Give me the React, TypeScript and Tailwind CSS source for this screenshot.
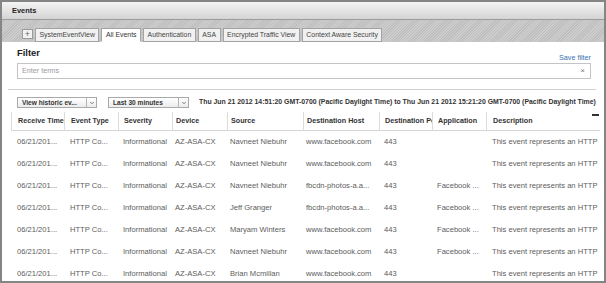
import { ChevronDown } from "lucide-react";

const tabs = [
  "SystemEventView",
  "All Events",
  "Authentication",
  "ASA",
  "Encrypted Traffic View",
  "Context Aware Security",
];

const columns = [
  { label: "Receive Time", w: "w-[53px]", pad: "pl-[6px]" },
  { label: "Event Type", w: "w-[54px]", pad: "pl-[6px]" },
  { label: "Severity", w: "w-[54px]", pad: "pl-[5px]" },
  { label: "Device", w: "w-[55px]", pad: "pl-[3px]" },
  { label: "Source", w: "w-[76px]", pad: "pl-[3px]" },
  { label: "Destination Host", w: "w-[76px]", pad: "pl-[3px]" },
  { label: "Destination Port", w: "w-[53px]", pad: "pl-[5px]" },
  { label: "Application", w: "w-[54px]", pad: "pl-[5px]" },
  { label: "Description", w: "w-[114px]", pad: "pl-[6px]" },
];

const rows = [
  ["Navneet Niebuhr", "www.facebook.com", ""],
  ["Navneet Niebuhr", "www.facebook.com", ""],
  ["Navneet Niebuhr", "fbcdn-photos-a.a...", "Facebook ..."],
  ["Jeff Granger", "fbcdn-photos-a.a...", "Facebook ..."],
  ["Maryam Winters", "www.facebook.com", "Facebook ..."],
  ["Navneet Niebuhr", "www.facebook.com", "Facebook ..."],
  ["Brian Mcmillan", "www.facebook.com", ""],
];

function Dropdown({ label, width }: { label: string; width: string }) {
  return (
    <div
      className={`${width} h-[11px] flex border border-[#a9a9a9] bg-gradient-to-b from-white to-[#ececec]`}
    >
      <span className="flex-1 pl-[4px] text-[6.6px] leading-[9px] font-bold text-[#333] whitespace-nowrap overflow-hidden">
        {label}
      </span>
      <span className="w-[10px] border-l border-[#b5b5b5] flex items-center justify-center">
        <ChevronDown className="w-[6px] h-[6px] text-[#555]" strokeWidth={3} />
      </span>
    </div>
  );
}

export default function App() {
  return (
    <div className="w-[606px] h-[283px] overflow-hidden border-2 border-[#858585] bg-white flex flex-col font-['Liberation_Sans',Arial,sans-serif]">
      {/* Title bar */}
      <div className="h-[18px] shrink-0 flex items-center pl-[10px] bg-gradient-to-b from-[#f4f4f4] to-[#d4d4d4] border-b border-[#9c9c9c]">
        <span className="text-[7.4px] font-bold text-[#222]">Events</span>
      </div>

      {/* Tab band */}
      <div className="h-[22px] shrink-0 flex items-end pl-[20px] gap-[2px] bg-[repeating-linear-gradient(-45deg,#cdcdcd_0px,#cdcdcd_1px,#bfbfbf_1px,#bfbfbf_2px)]">
        <div className="w-[11px] h-[10px] mb-[3px] border border-[#9a9a9a] bg-[#f2f2f2] flex items-center justify-center text-[9px] leading-none text-[#666]">
          +
        </div>
        {tabs.map((t) => (
          <div
            key={t}
            className={`h-[14px] px-[3.5px] flex items-center text-[6.9px] whitespace-nowrap border border-[#a3a3a3] ${
              t === "All Events"
                ? "bg-white border-b-white text-[#333]"
                : "bg-[#f1f1f1] text-[#444]"
            }`}
          >
            {t}
          </div>
        ))}
      </div>

      {/* Filter */}
      <div className="h-[21px] shrink-0 flex justify-between pl-[15px] pr-[13px] pt-[5px]">
        <span className="self-start text-[9.4px] leading-[12px] font-bold text-[#222]">
          Filter
        </span>
        <span className="self-end text-[7.2px] leading-[9px] text-[#3a6fae] pb-[1px]">
          Save filter
        </span>
      </div>
      <div className="shrink-0 ml-[15px] mr-[13px] h-[16px] border border-[#c4c4c4] flex items-center justify-between pl-[4px] pr-[5px]">
        <span className="text-[7.2px] text-[#9a9a9a]">Enter terms</span>
        <span className="text-[8px] text-[#777]">×</span>
      </div>

      <div className="shrink-0 h-px mt-[10px] ml-[6px] mr-[8px] bg-[#cfcfcf]" />

      {/* Time range */}
      <div className="shrink-0 mt-[7px] h-[11px] flex items-center pl-[15px]">
        <Dropdown label="View historic ev..." width="w-[80px]" />
        <div className="ml-[11px]">
          <Dropdown label="Last 30 minutes" width="w-[81px]" />
        </div>
        <span className="ml-[10px] text-[6.9px] font-bold text-[#333] whitespace-nowrap">
          Thu Jun 21 2012 14:51:20 GMT-0700 (Pacific Daylight Time) to Thu Jun 21 2012 15:21:20 GMT-0700 (Pacific Daylight Time)
        </span>
      </div>

      {/* Table */}
      <div className="shrink-0 mt-[4px] ml-[9px] w-[589px]">
        <div className="relative h-[19px] flex border-b border-[#d6d6d6]">
          {columns.map((c) => (
            <div
              key={c.label}
              className={`${c.w} ${c.pad} shrink-0 h-full flex items-center border-l border-[#dcdcdc] overflow-hidden whitespace-nowrap text-[7.2px] font-bold text-[#333]`}
            >
              {c.label}
            </div>
          ))}
          <div className="absolute right-[1px] top-[2px] w-[7px] h-[2px] bg-[#333]" />
        </div>
        {rows.map((r, i) => (
          <div
            key={i}
            className="h-[22px] flex text-[7.6px] text-[#5c5c5c] whitespace-nowrap"
          >
            {[
              "06/21/201...",
              "HTTP Co...",
              "Informational",
              "AZ-ASA-CX",
              r[0],
              r[1],
              "443",
              r[2],
              "This event represents an HTTP",
            ].map((v, j) => (
              <div
                key={j}
                className={`${columns[j].w} ${columns[j].pad} shrink-0 flex items-center overflow-hidden`}
              >
                {v}
              </div>
            ))}
          </div>
        ))}
      </div>
    </div>
  );
}
